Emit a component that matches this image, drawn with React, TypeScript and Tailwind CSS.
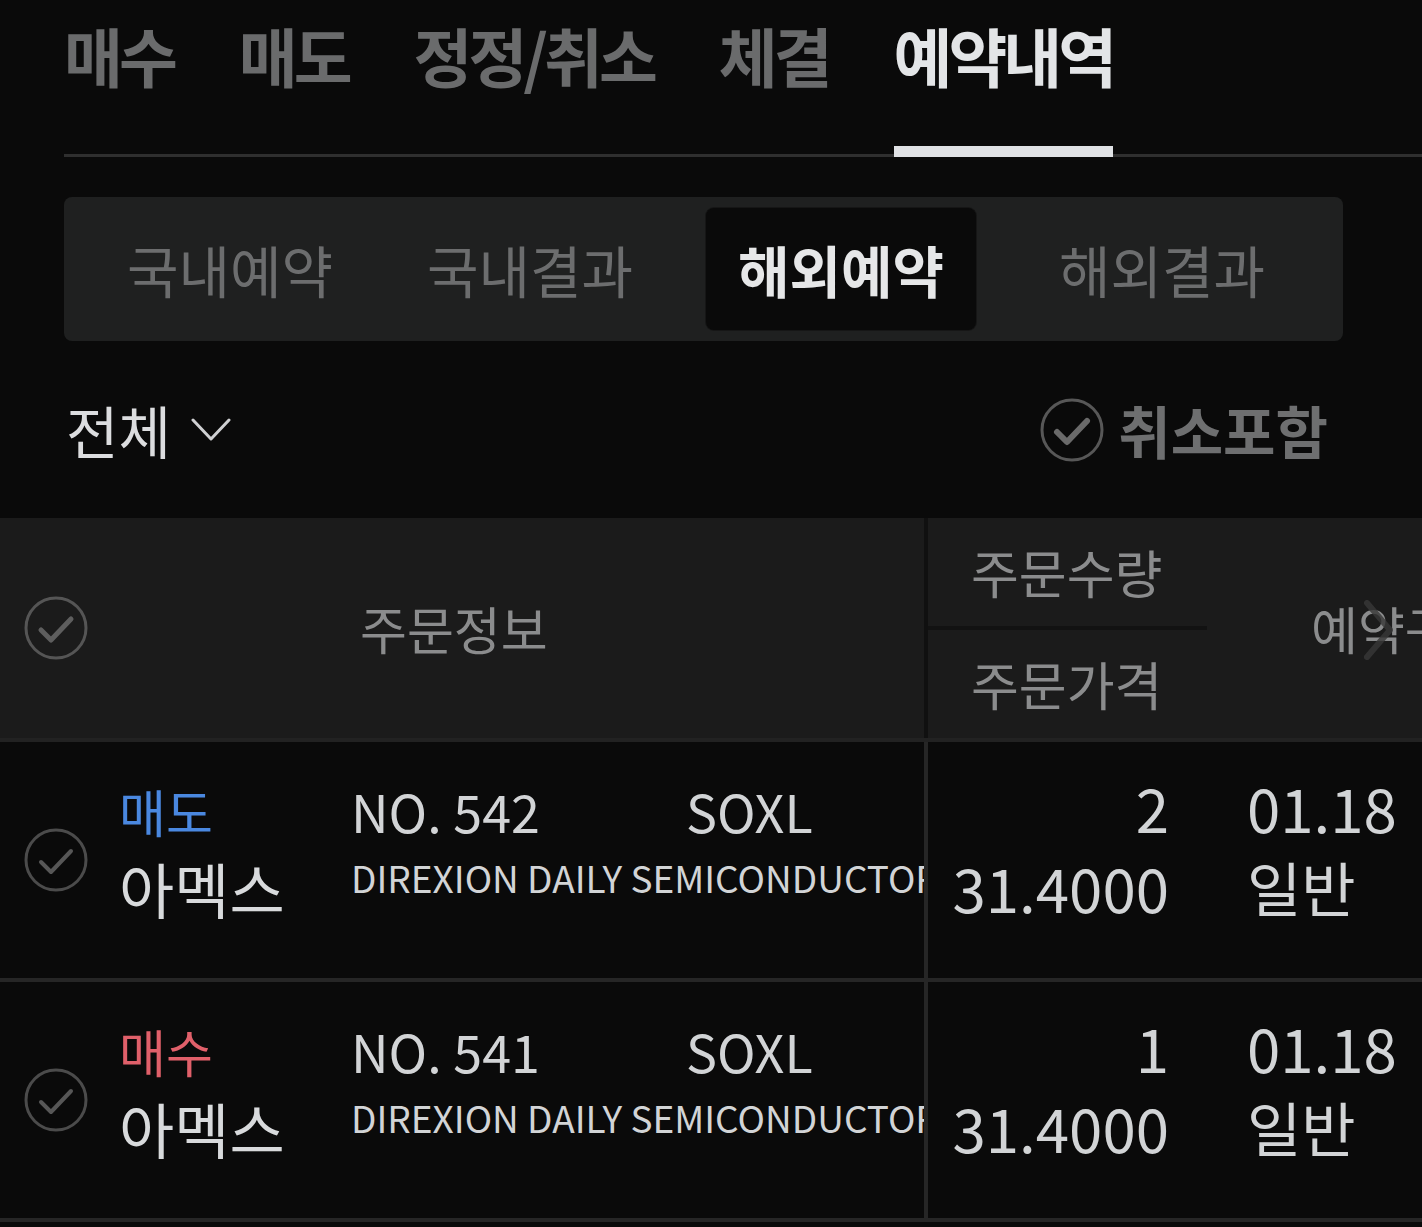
import React from "react";

type CheckProps = { ring: string; mark: string; ringW?: number; markW?: number };

const CheckCircle = ({ ring, mark, ringW = 3, markW = 5 }: CheckProps) => (
    <svg width="64" height="64" viewBox="0 0 64 64" fill="none">
        <circle cx="32" cy="32" r="30" stroke={ring} strokeWidth={ringW} />
        <path d="M17 34 L27 44 L47 23" stroke={mark} strokeWidth={markW} strokeLinecap="round" strokeLinejoin="round" />
    </svg>
);

const tabs = ["매수", "매도", "정정/취소", "체결", "예약내역"];

// segment items are not evenly spaced in the app, so each keeps its own offset
const segments = [
    { label: "국내예약", offset: "ml-[31px]" },
    { label: "국내결과", offset: "ml-[30px]" },
    { label: "해외예약", offset: "ml-[41px]" },
    { label: "해외결과", offset: "ml-[51px]" },
];

const orders = [
    { side: "매도", sideColor: "text-[#4a88e0]", no: "NO. 542", qty: "2" },
    { side: "매수", sideColor: "text-[#e0606a]", no: "NO. 541", qty: "1" },
];

const App = () => {
    return (
        <div className="h-[1227px] w-[1422px] overflow-hidden bg-[#0a0a0a] font-['Noto_Sans_CJK_KR',sans-serif] text-[#d2d4d6]">
            <div className="pl-[64px]">
                {/* top tabs */}
                <div className="flex gap-[65px] border-b-[3px] border-[#2f2f2f] pt-[22px]">
                    {tabs.map((t, i) => {
                        const active = i === tabs.length - 1;
                        return (
                            <div key={t} className="flex flex-col">
                                <span className={`whitespace-nowrap text-[64px] font-bold leading-none tracking-[-4px] ${active ? "text-[#e3e5e7]" : "text-[#6a6b6c]"}`}>
                                    {t}
                                </span>
                                <div className={`relative -mb-[3px] mt-[60px] h-[11px] ${active ? "bg-[#e0e2e5]" : ""}`} />
                            </div>
                        );
                    })}
                </div>

                {/* segment control */}
                <div className="mt-[40px] flex w-[1279px] rounded-[8px] bg-[#1f2020] py-[11px]">
                    {segments.map((s, i) => {
                        const active = i === 2;
                        return (
                            <div
                                key={s.label}
                                className={`flex h-[122px] w-[270px] shrink-0 items-center justify-center rounded-[8px] ${s.offset} ${active ? "bg-[#0a0a0a] shadow-[0_0_0_1px_#161616]" : ""}`}
                            >
                                <span className={`text-[56px] leading-none ${active ? "font-bold text-[#e6e7e8]" : "text-[#6c6d6e]"}`}>
                                    {s.label}
                                </span>
                            </div>
                        );
                    })}
                </div>

                {/* filter row */}
                <div className="flex h-[177px] items-center justify-between pr-[94px]">
                    <div className="flex items-center gap-[20px] pl-[2px]">
                        <span className="text-[57px] leading-none text-[#dcdddf]">전체</span>
                        <svg width="40" height="26" viewBox="0 0 40 26" fill="none">
                            <path d="M2 3 L20 22 L38 3" stroke="#cfd0d2" strokeWidth="3" strokeLinecap="round" strokeLinejoin="round" />
                        </svg>
                    </div>
                    <div className="flex items-center gap-[14px]">
                        <CheckCircle ring="#575757" mark="#6a6a6a" ringW={3} markW={6} />
                        <span className="text-[57px] font-bold leading-none text-[#6e6f70]">취소포함</span>
                    </div>
                </div>
            </div>

            {/* table header */}
            <div className="relative flex h-[224px] border-b-[4px] border-[#222222] bg-[#1b1b1b] text-[#8b8c8d]">
                <div className="flex w-[924px] shrink-0 items-center">
                    <div className="pl-[24px]">
                        <CheckCircle ring="#555555" mark="#5e5e5e" ringW={3} markW={5} />
                    </div>
                    <span className="ml-[272px] text-[51px] leading-none">주문정보</span>
                </div>
                <div className="flex w-[283px] shrink-0 flex-col border-l-[4px] border-[#101010]">
                    <div className="flex h-[112px] items-center border-b-[4px] border-[#121212] pl-[43px]">
                        <span className="text-[52px] leading-none">주문수량</span>
                    </div>
                    <div className="flex flex-1 items-center pl-[43px]">
                        <span className="text-[52px] leading-none">주문가격</span>
                    </div>
                </div>
                <div className="flex flex-1 items-center whitespace-nowrap pl-[104px]">
                    <span className="text-[51px] leading-none">예약구분</span>
                </div>
                <svg className="absolute left-[1362px] top-[81px] opacity-80" width="34" height="62" viewBox="0 0 34 62" fill="none">
                    <path d="M5 4 L28 31 L5 58" stroke="#383838" strokeWidth="6" strokeLinecap="round" strokeLinejoin="round" />
                </svg>
            </div>

            {/* rows */}
            {orders.map((o) => (
                <div key={o.no} className="flex h-[240px] border-b-[4px] border-[#262626]">
                    <div className="flex w-[924px] shrink-0 overflow-hidden">
                        <div className="flex items-center pl-[24px]">
                            <CheckCircle ring="#4b4b4b" mark="#575757" ringW={3} markW={4} />
                        </div>
                        <div className="ml-[31px] pt-[43px]">
                            <div className="flex items-baseline whitespace-nowrap">
                                <span className={`w-[232px] shrink-0 text-[51px] leading-none ${o.sideColor}`}>{o.side}</span>
                                <span className="w-[335px] shrink-0 text-[52px] leading-none">{o.no}</span>
                                <span className="text-[52px] leading-none">SOXL</span>
                            </div>
                            <div className="mt-[21px] flex items-start whitespace-nowrap">
                                <span className="w-[232px] shrink-0 text-[60px] leading-none text-[#d8dadc]">아멕스</span>
                                <span className="mt-[1px] text-[37px] leading-none">DIREXION DAILY SEMICONDUCTOR BULL 3X SHARES</span>
                            </div>
                        </div>
                    </div>
                    <div className="w-[283px] shrink-0 border-l-[4px] border-[#262626] pr-[38px] pt-[25px] text-right text-[60px] leading-[80px]">
                        <div>{o.qty}</div>
                        <div>31.4000</div>
                    </div>
                    <div className="flex-1 whitespace-nowrap pl-[40px] pt-[25px] leading-[80px]">
                        <div className="text-[60px]">01.18</div>
                        <div className="text-[59px]">일반</div>
                    </div>
                </div>
            ))}
        </div>
    );
};

export default App;
